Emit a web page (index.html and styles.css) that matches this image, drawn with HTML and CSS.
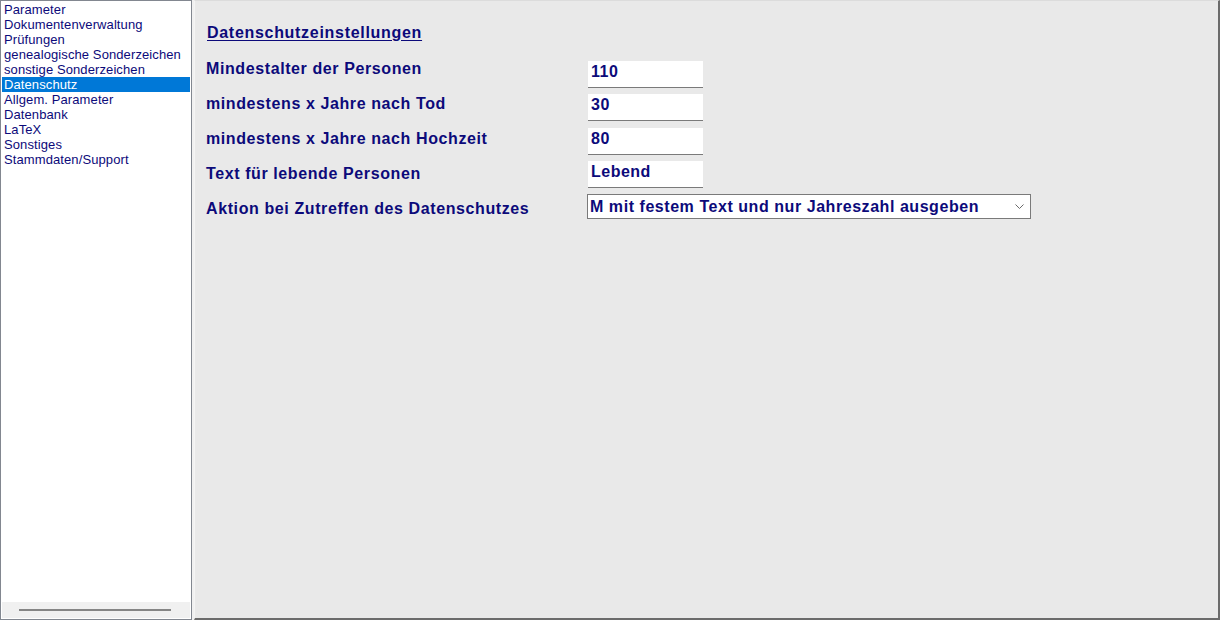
FILE: index.html
```html
<!DOCTYPE html>
<html lang="de">
<head>
<meta charset="utf-8">
<title>Datenschutz</title>
<link rel="stylesheet" href="styles.css">
</head>
<body>
<div class="app">
  <aside class="sidebar">
    <ul class="nav">
      <li>Parameter</li>
      <li>Dokumentenverwaltung</li>
      <li>Prüfungen</li>
      <li>genealogische Sonderzeichen</li>
      <li>sonstige Sonderzeichen</li>
      <li class="active">Datenschutz</li>
      <li>Allgem. Parameter</li>
      <li>Datenbank</li>
      <li>LaTeX</li>
      <li>Sonstiges</li>
      <li>Stammdaten/Support</li>
    </ul>
    <div class="hscroll"><div class="thumb"></div></div>
  </aside>
  <main class="main">
    <h1 class="title">Datenschutzeinstellungen</h1>
    <div class="form">
      <div class="labels">
        <label class="label">Mindestalter der Personen</label>
        <label class="label">mindestens x Jahre nach Tod</label>
        <label class="label">mindestens x Jahre nach Hochzeit</label>
        <label class="label">Text für lebende Personen</label>
        <label class="label">Aktion bei Zutreffen des Datenschutzes</label>
      </div>
      <div class="fields">
        <div class="input">110</div>
        <div class="input">30</div>
        <div class="input">80</div>
        <div class="input">Lebend</div>
        <div class="select"><span>M mit festem Text und nur Jahreszahl ausgeben</span>
          <svg class="chev" width="9" height="5" viewBox="0 0 9 5"><path d="M0.5 0.5 L4.5 4.5 L8.5 0.5" fill="none" stroke="#6a6a6a" stroke-width="1"/></svg>
        </div>
      </div>
    </div>
  </main>
</div>
</body>
</html>
```
FILE: styles.css
```css
* { box-sizing: border-box; }
html, body { margin: 0; padding: 0; }
body {
  width: 1220px;
  height: 620px;
  background: #f0f0f0;
  font-family: "Liberation Sans", Arial, sans-serif;
  overflow: hidden;
}
.app {
  display: flex;
  height: 620px;
  gap: 2px;
}
.sidebar {
  width: 192px;
  height: 620px;
  background: #ffffff;
  border: 1px solid #828790;
  display: flex;
  flex-direction: column;
  padding: 1px;
}
.nav {
  list-style: none;
  margin: 0;
  padding: 0;
  flex: 1;
}
.nav li {
  height: 15px;
  line-height: 15px;
  font-size: 13px;
  letter-spacing: 0.1px;
  color: #0c0a7a;
  padding-left: 2px;
  white-space: nowrap;
}
.nav li.active {
  background: #0078d7;
  color: #ffffff;
}
.hscroll {
  height: 16px;
  background: #f0f0f0;
  display: flex;
  align-items: center;
  padding: 0 17px;
}
.thumb {
  height: 2px;
  width: 152px;
  background: #858585;
}
.main {
  flex: 1;
  height: 620px;
  background: #e9e9e9;
  border-top: 1px solid #dcdcdc;
  border-left: 1px solid #f4f4f4;
  border-right: 2px solid #6b6b6b;
  border-bottom: 2px solid #6b6b6b;
  padding: 21px 0 0 11px;
}
.title {
  margin: 0;
  font-size: 16px;
  letter-spacing: 0.7px;
  font-weight: bold;
  line-height: 22px;
  color: #0c0a7a;
  text-decoration: underline;
  text-underline-offset: 2px;
  padding-left: 1px;
}
.form {
  display: flex;
  margin-top: 17px;
}
.labels {
  width: 382px;
  display: flex;
  flex-direction: column;
  gap: 17.9px;
  margin-top: -1px;
}
.label {
  display: block;
  font-size: 16px;
  letter-spacing: 0.6px;
  font-weight: bold;
  line-height: 17px;
  color: #0c0a7a;
  white-space: nowrap;
}
.fields {
  display: flex;
  flex-direction: column;
  gap: 6.25px;
}
.input {
  width: 115px;
  height: 27px;
  background: #ffffff;
  border-bottom: 1px solid #7a7a7a;
  font-size: 16px;
  font-weight: bold;
  letter-spacing: 0.5px;
  color: #0c0a7a;
  padding: 1px 0 0 3px;
  line-height: 20px;
}
.select {
  margin-left: -1px;
  width: 444px;
  height: 25px;
  background: #ffffff;
  border: 1px solid #7a7a7a;
  display: flex;
  align-items: center;
  justify-content: space-between;
  padding: 0 6px 0 2px;
  font-size: 16px;
  font-weight: bold;
  letter-spacing: 0.55px;
  color: #0c0a7a;
}
.chev { display: block; }
```
